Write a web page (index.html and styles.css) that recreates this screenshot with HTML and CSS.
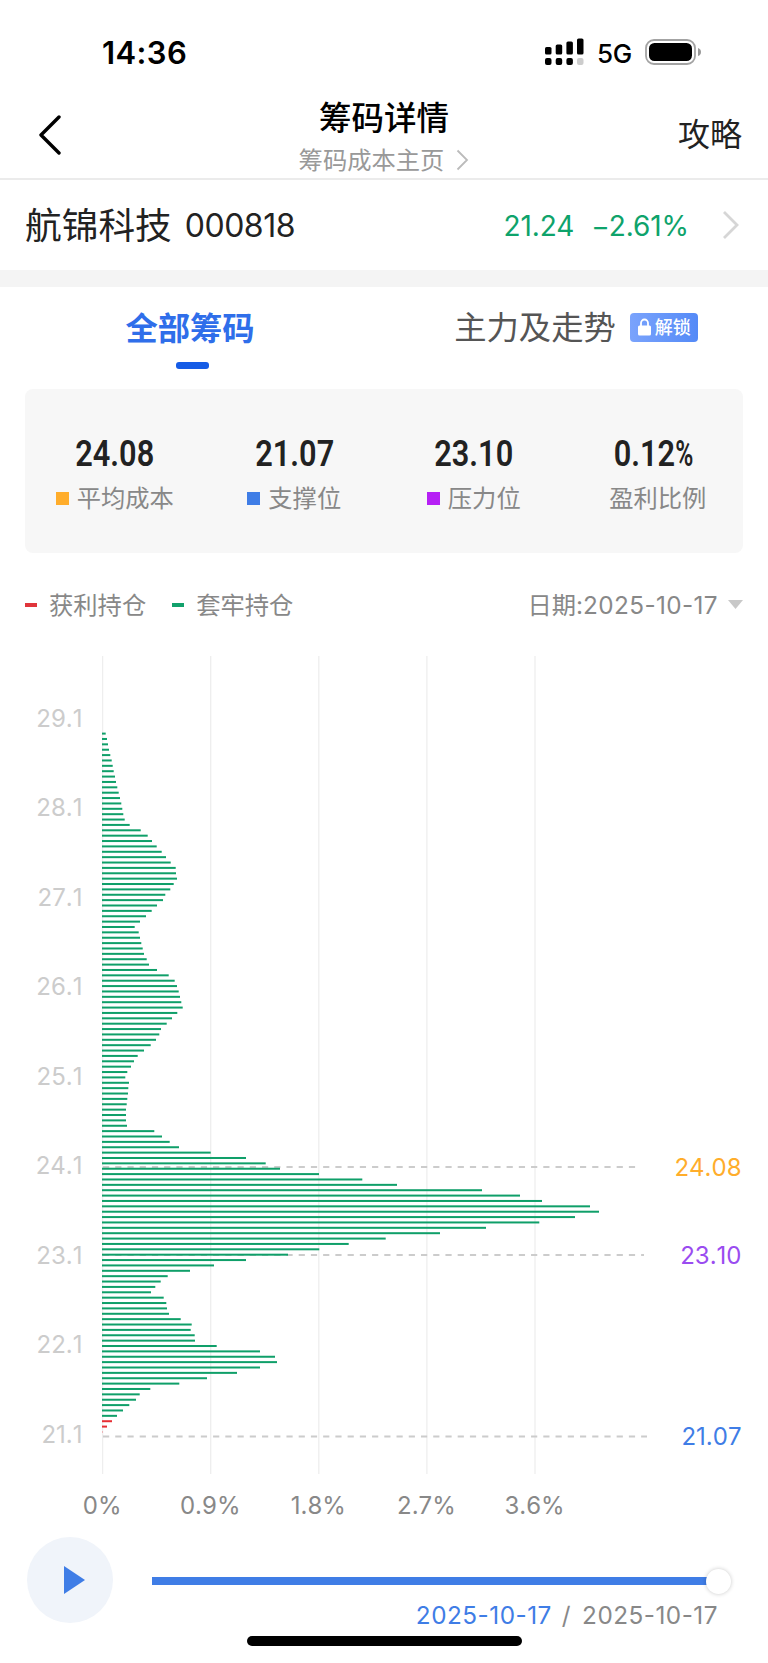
FILE: index.html
```html
<!DOCTYPE html>
<html lang="zh-CN">
<head>
    <meta charset="UTF-8">
    <meta name="viewport" content="width=device-width, initial-scale=1.0">
    <title>筹码详情</title>
    <link rel="stylesheet" href="styles.css">
</head>
<body>
    <div class="status-bar">
        <span class="time">14:36</span>
        <div class="status-icons">
            <svg class="signal" width="40" height="28" viewBox="0 0 40 28">
                <rect x="0" y="9" width="6.5" height="7.5" rx="1.6"/>
                <rect x="10.7" y="6.5" width="6.5" height="10" rx="1.6"/>
                <rect x="21.4" y="3.5" width="6.5" height="13" rx="1.6"/>
                <rect x="32" y="0.5" width="6.5" height="16" rx="1.6"/>
                <rect x="0" y="20" width="6.5" height="7" rx="2"/>
                <rect x="10.7" y="20" width="6.5" height="7" rx="2"/>
                <rect x="21.4" y="20" width="6.5" height="7" rx="2"/>
                <rect x="32" y="20" width="6.5" height="7" rx="2" fill="#ccc"/>
            </svg>
            <span class="network">5G</span>
            <svg class="battery" width="57" height="26" viewBox="0 0 57 26">
                <rect x="1" y="1" width="49" height="24" rx="8" fill="none" stroke="#a3a3a3" stroke-width="1.8"/>
                <rect x="4" y="4" width="43" height="18" rx="5.5"/>
                <path d="M53 9 Q56 10 56 13 Q56 16 53 17 Z" fill="#999"/>
            </svg>
        </div>
    </div>

    <div class="nav">
        <svg class="back" width="24" height="40" viewBox="0 0 24 40">
            <path d="M21 2 L3 20 L21 38" fill="none" stroke="#000" stroke-width="3.4" stroke-linecap="round" stroke-linejoin="round"/>
        </svg>
        <div class="nav-center">
            <h1>筹码详情</h1>
            <div class="subtitle">
                <span>筹码成本主页</span>
                <svg width="13" height="22" viewBox="0 0 13 22">
                    <path d="M1.5 1.5 L11 11 L1.5 20.5" fill="none" stroke="#bbb" stroke-width="1.8"/>
                </svg>
            </div>
        </div>
        <span class="guide">攻略</span>
    </div>

    <div class="stock">
        <span class="stock-name">航锦科技</span>
        <span class="stock-code">000818</span>
        <span class="price">21.24</span>
        <span class="change">−2.61%</span>
        <svg class="stock-arrow" width="18" height="30" viewBox="0 0 18 30">
            <path d="M2 2 L15 15 L2 28" fill="none" stroke="#d6d6d6" stroke-width="2.8"/>
        </svg>
    </div>

    <div class="tabs">
        <div class="tab active">全部筹码</div>
        <div class="tab">
            <span>主力及走势</span>
            <span class="badge">
                <svg width="13" height="18" viewBox="0 0 13 18">
                    <path d="M3 8 V5 a3.5 3.5 0 0 1 7 0 V8" fill="none" stroke="#fff" stroke-width="1.8"/>
                    <rect x="0" y="7.5" width="13" height="10" rx="1.5" fill="#fff"/>
                </svg>
                解锁
            </span>
        </div>
    </div>

    <div class="stats">
        <div class="stat">
            <div class="stat-value">24.08</div>
            <div class="stat-label"><i class="orange"></i>平均成本</div>
        </div>
        <div class="stat">
            <div class="stat-value">21.07</div>
            <div class="stat-label"><i class="blue"></i>支撑位</div>
        </div>
        <div class="stat">
            <div class="stat-value">23.10</div>
            <div class="stat-label"><i class="purple"></i>压力位</div>
        </div>
        <div class="stat">
            <div class="stat-value">0.12<span class="percent">%</span></div>
            <div class="stat-label ratio">盈利比例</div>
        </div>
    </div>

    <div class="legend">
        <span class="legend-item"><i class="red"></i>获利持仓</span>
        <span class="legend-item"><i class="green"></i>套牢持仓</span>
        <span class="date">日期:<span class="date-value">2025-10-17</span></span>
        <svg class="caret" width="15" height="9" viewBox="0 0 15 9"><path d="M0 0 H15 L7.5 9 Z" fill="#c8c8c8"/></svg>
    </div>

    <svg id="chart" width="768" height="890" viewBox="0 640 768 890"></svg>

    <div class="player">
        <div class="play">
            <svg width="22" height="28" viewBox="0 0 22 28"><path d="M0 0 L21 14 L0 28 Z" fill="#3f7de6"/></svg>
        </div>
        <div class="progress">
            <div class="track"><div class="knob"></div></div>
            <div class="dates"><span class="current">2025-10-17</span><span class="slash">/</span><span>2025-10-17</span></div>
        </div>
    </div>
    <div class="home-indicator"></div>

    <script>
        // bar lengths from the highest price to the lowest
        const bars = [
            11, 15, 18, 21, 25, 29, 32, 35, 39, 42, 46, 50, 54, 58, 61, 64, 68, 83, 116, 137,
            150, 164, 179, 192, 206, 221, 222, 225, 215, 205, 190, 183, 165, 149, 132, 114, 98, 110, 114, 118,
            122, 126, 134, 141, 165, 200, 218, 225, 230, 234, 238, 242, 226, 210, 194, 177, 172, 162, 146, 126,
            107, 96, 87, 76, 70, 81, 79, 78, 76, 74, 72, 72, 72, 75, 157, 180, 203, 231, 326, 432,
            491, 534, 651, 781, 885, 1140, 1254, 1320, 1464, 1491, 1419, 1312, 1152, 1014, 851, 740, 652, 558, 432, 336,
            264, 197, 176, 160, 147, 185, 193, 195, 201, 236, 269, 266, 278, 279, 344, 474, 519, 525, 474, 405,
            315, 232, 145, 113, 102, 82, 63, 45, 30, 15, 1
        ];
        const left = 102;
        let svg = '';

        // vertical grid and percent labels
        ['0%', '0.9%', '1.8%', '2.7%', '3.6%'].forEach((label, i) => {
            const x = left + 0.6 + i * 108.1;
            svg += `<line class="grid" x1="${x}" x2="${x}" y1="656" y2="1474"/>`;
            svg += `<text class="x-label" x="${x - 0.5}" y="1513.5">${label}</text>`;
        });

        // price axis
        for (let i = 0; i < 9; i++) {
            svg += `<text class="y-label" x="82.5" y="${726.5 + i * 89.5}">${(29.1 - i).toFixed(1)}</text>`;
        }

        // cost, pressure and support lines
        [
            { y: 1167, end: 637, text: '24.08', color: '#ffad2b' },
            { y: 1255, end: 644, text: '23.10', color: '#9a4cf0' },
            { y: 1436.5, end: 647, text: '21.07', color: '#3f7de6' }
        ].forEach(l => {
            svg += `<line class="dashed" x1="103" x2="${l.end}" y1="${l.y}" y2="${l.y}"/>`;
            svg += `<text class="price-label" x="741.5" y="${l.y + 8.8}" fill="${l.color}">${l.text}</text>`;
        });

        bars.forEach((len, i) => {
            const color = i >= bars.length - 3 ? '#e62e34' : '#0f9f69';
            svg += `<rect x="${left}" y="${(732.6 + i * 5.372).toFixed(2)}" width="${(len / 3).toFixed(1)}" height="2" fill="${color}"/>`;
        });

        document.getElementById('chart').innerHTML = svg;
    </script>
</body>
</html>
```
FILE: styles.css
```css
* {
    box-sizing: border-box;
}
body {
    margin: 0;
    width: 768px;
    height: 1663px;
    overflow: hidden;
    background: #fff;
    font-family: Inter, "Noto Sans CJK SC", sans-serif;
    color: #222;
}
svg {
    display: block;
    flex: none;
}
.status-bar {
    height: 98px;
    padding: 0 66px 0 102px;
    display: flex;
    justify-content: space-between;
    color: #000;
}
.time {
    font-size: 31px;
    line-height: 38px;
    margin-top: 34px;
    font-weight: 600;
    letter-spacing: 0.4px;
}
.status-icons {
    display: flex;
    align-items: flex-start;
}
.signal { margin-top: 38px; }
.network {
    font-size: 26px;
    line-height: 32px;
    font-weight: 500;
    letter-spacing: -0.3px;
    margin: 38px 13px 0 12px;
}
.battery { margin-top: 39px; }

.nav {
    height: 82px;
    padding: 0 26px 0 38px;
    display: grid;
    grid-template-columns: 258px 176px 1fr;
    border-bottom: 2px solid #ebebeb;
}
.back { margin-top: 17px; }
.nav-center {
    text-align: center;
}
h1 {
    margin: 1px 0 0;
    font-size: 32.5px;
    line-height: 40px;
    font-weight: 500;
    color: #000;
}
.subtitle {
    display: flex;
    align-items: center;
    justify-content: center;
    gap: 12px;
    font-size: 24.3px;
    line-height: 36px;
    margin-top: 3px;
    color: #999;
    white-space: nowrap;
}
.guide {
    font-size: 32px;
    line-height: 40px;
    margin-top: 17px;
    text-align: right;
}

.stock {
    height: 107px;
    padding: 0 28px 0 25px;
    display: flex;
    align-items: center;
    border-bottom: 17px solid #f4f4f4;
}
.stock-name {
    font-size: 36.7px;
    line-height: 50px;
    margin-top: 2px;
}
.stock-code {
    font-size: 32px;
    letter-spacing: -0.5px;
    margin-left: 13px;
}
.price, .change {
    font-size: 28px;
    color: #0ea36b;
    letter-spacing: -0.1px;
    margin-top: 1px;
}
.price { margin-left: auto; }
.change { margin-left: 17px; }
.stock-arrow { margin-left: 33px; }

.tabs {
    height: 102px;
    display: grid;
    grid-template-columns: 1fr 1fr;
}
.tab {
    display: flex;
    justify-content: center;
    align-items: center;
    height: 80px;
    font-size: 32.3px;
    line-height: 48px;
    color: #555;
    white-space: nowrap;
}
.tab > span:first-child { margin-top: 2px; }
.tab.active {
    flex-direction: column;
    justify-content: flex-start;
    height: 102px;
    padding-top: 18px;
    padding-right: 4px;
    color: #2f6eea;
    font-weight: 700;
}
.tab.active::after {
    content: "";
    width: 33px;
    height: 7px;
    margin: 9px 0 0 5px;
    border-radius: 3px;
    background: #155ce6;
}
.badge {
    display: flex;
    align-items: center;
    gap: 4px;
    width: 68px;
    height: 29px;
    margin-left: 14px;
    padding-left: 8px;
    border-radius: 4px;
    background: linear-gradient(90deg, #7aa3fc, #548af7);
    color: #fff;
    font-size: 18px;
    line-height: 33px;
    font-weight: 500;
}

.stats {
    display: grid;
    grid-template-columns: repeat(4, 1fr);
    height: 164px;
    margin: 0 25px;
    padding-top: 43px;
    border-radius: 8px;
    background: #f7f7f7;
    text-align: center;
}
.stat-value {
    font-family: Roboto, sans-serif;
    font-size: 37px;
    line-height: 44px;
    font-weight: 600;
    transform: scaleX(0.83);
}
.percent {
    display: inline-block;
    transform: scaleX(0.8);
    margin: 0 -2px 0 -3px;
}
.stat-label {
    display: flex;
    justify-content: center;
    align-items: center;
    font-size: 24.3px;
    line-height: 36px;
    margin-top: 4px;
    color: #888;
}
.stat-label i {
    width: 13px;
    height: 13px;
    margin-right: 8px;
}
.stat-label.ratio { padding-left: 9px; }
.orange { background: #ffad2b; }
.blue { background: #3f7de6; }
.purple { background: #b620f5; }

.legend {
    display: flex;
    align-items: center;
    height: 87px;
    padding: 18px 25px 4px;
    font-size: 24.3px;
    color: #888;
}
.legend-item {
    display: flex;
    align-items: center;
    margin-right: 25px;
}
.legend-item i {
    width: 12px;
    height: 4px;
    margin: 2px 12px 0 0;
}
.legend-item + .legend-item { margin-left: 1px; }
.red { background: #e0353b; }
.green { background: #12a16c; }
.date { margin-left: auto; margin-right: 10px; }
.date-value { letter-spacing: 0.4px; }
.caret { margin-top: 2px; }

#chart {
    font-family: Inter, sans-serif;
    font-size: 24px;
    font-kerning: none;
}
.grid {
    stroke: #eee;
    stroke-width: 1.3;
}
.dashed {
    stroke: #ccc;
    stroke-width: 2;
    stroke-dasharray: 6.2 6.03;
}
.x-label {
    fill: #888;
    text-anchor: middle;
}
.y-label {
    fill: #ccc;
    text-anchor: end;
}
.price-label {
    text-anchor: end;
}

.player {
    display: flex;
    height: 106px;
    padding: 7px 37px 0 27px;
}
.play {
    width: 86px;
    height: 86px;
    padding-left: 10px;
    border-radius: 50%;
    background: #f0f4fa;
    display: flex;
    align-items: center;
    justify-content: center;
}
.progress {
    flex: 1;
    margin-left: 39px;
    padding-top: 40px;
}
.track {
    display: flex;
    align-items: center;
    justify-content: flex-end;
    height: 8px;
    background: linear-gradient(#3f7de6, #3f7de6) no-repeat;
    background-size: calc(100% - 12px) 100%;
}
.knob {
    width: 25px;
    height: 25px;
    border-radius: 50%;
    background: #fff;
    box-shadow: 0 0 4px rgba(0, 0, 0, 0.22);
}
.dates {
    display: flex;
    justify-content: flex-end;
    margin-top: 15px;
    padding-right: 13px;
    font-size: 24.3px;
    line-height: 30px;
    letter-spacing: 0.5px;
    color: #888;
}
.current { color: #3f7de6; }
.slash { margin: 0 11px 0 10px; }
.home-indicator {
    width: 275px;
    height: 10px;
    margin: 0 auto;
    border-radius: 5px;
    background: #000;
}
```
